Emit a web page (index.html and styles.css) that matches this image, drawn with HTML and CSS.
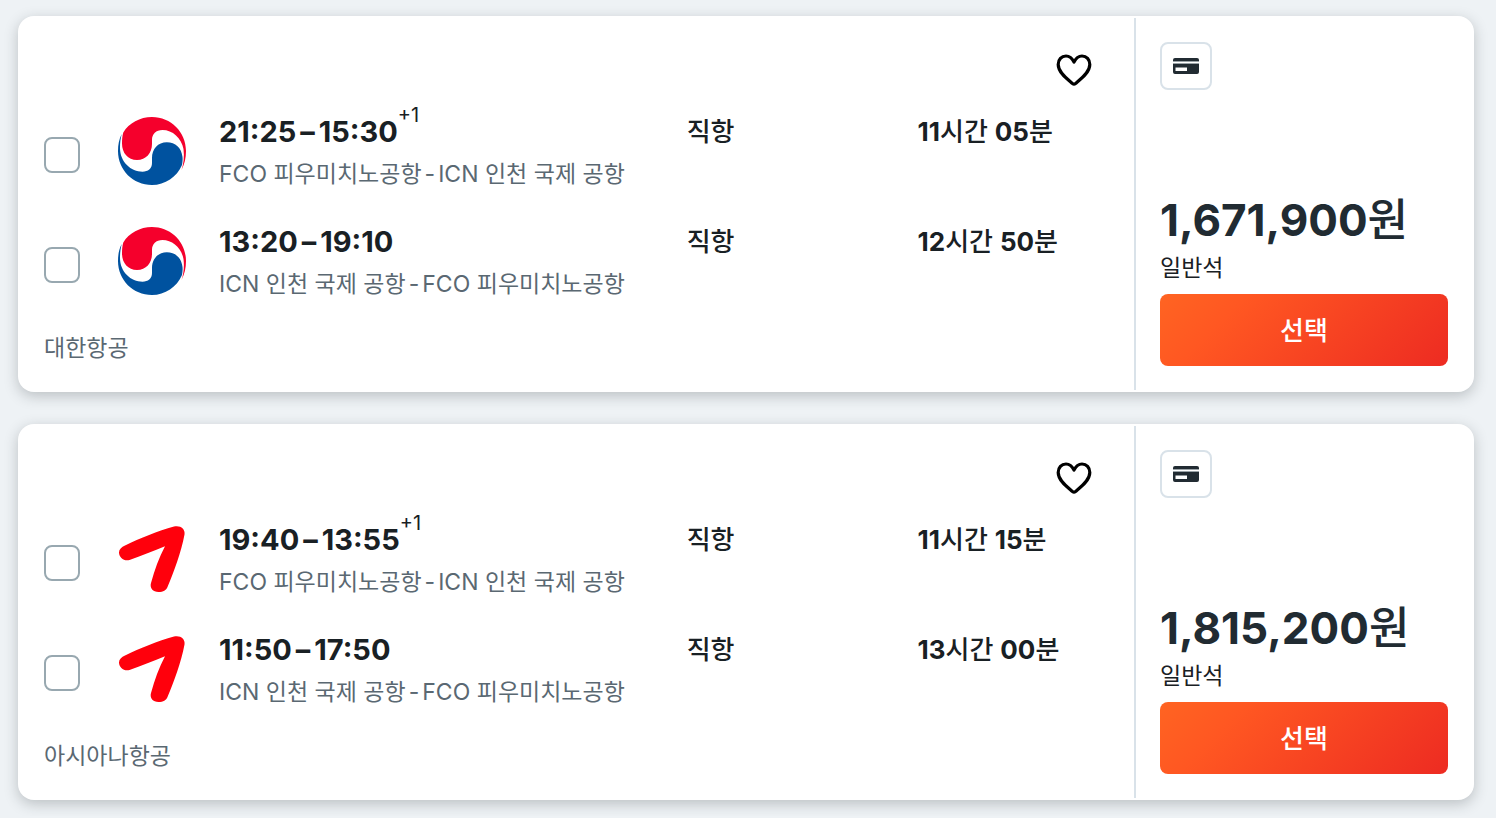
FILE: index.html
```html
<!DOCTYPE html>
<html lang="ko">
<head>
    <meta charset="UTF-8">
    <meta name="viewport" content="width=device-width, initial-scale=1.0">
    <title>항공권 검색 결과</title>
    <link rel="stylesheet" href="styles.css">
</head>
<body>
    <!-- Shared icons -->
    <svg class="sprite" aria-hidden="true">
        <symbol id="korean-air" viewBox="0 0 68 68">
            <path fill="#f5002c" d="M5.3 15.5C11 6 22 0 34 0c19 0 34 15 34 34 0 7-1.500 13-4.500 19 2-6 3-13 2-21C63.500 21 54.500 13 44.500 13 38 13 34 17 34 23v4c0 9-6 16-15 16C10 43 4 36 4 26.500c0-4 .3-8 1.300-11z"/>
            <path fill="#00529f" d="M3.700 17C1 22 0 28 0 34c0 19 15 34 34 34 13 0 25-8 30-20 .5-3 .8-5 .5-8-1-9-7-14.700-15.700-14.700C40 25.300 34 32 34 41v5c0 5.500-4 8.700-9.500 8.700C13 54.700 2 45 2 31c0-5 .5-9.500 1.700-14z"/>
        </symbol>
        <symbol id="asiana" viewBox="0 0 68 68">
            <path fill="#ff000c" d="M7 20.500C22 13 40 6 56 1.500c6-1.500 11.500 2 10.500 8C63 28 56 46 49.500 62c-1.500 3.500-4 5-9 5-5.500 0-9-4-7.500-9C36.500 45 41 33 47 21.300 36 26 23 31 11.500 35 6 36.500 1 32.500 1 27.500 1 24.500 3.500 22 7 20.500z"/>
        </symbol>
        <symbol id="heart" viewBox="0 0 36 32">
            <path fill="none" stroke="#000" stroke-width="3.200" stroke-linejoin="round" d="M18 8C16 4 13.500 2 10 2 5.500 2 2.200 5.500 2.200 10.500c0 8 9 14.500 14.300 19 1 .8 2 .8 3 0 5.300-4.500 14.300-11 14.300-19C33.800 5.500 30.500 2 26 2c-3.500 0-6 2-8 6z"/>
        </symbol>
        <symbol id="card" viewBox="0 0 26 16">
            <path fill="#212b32" d="M2 0h22a2 2 0 0 1 2 2v1H0V2a2 2 0 0 1 2-2z"/>
            <path fill="#212b32" fill-rule="evenodd" d="M0 6h26v8a2 2 0 0 1-2 2H2a2 2 0 0 1-2-2zM2.500 9.500v3.500h11.500V9.500z"/>
            <path fill="#9aa3a8" d="M0 3h26v1H0zM0 5h26v1H0z"/>
        </symbol>
    </svg>

    <main class="results">
        <article class="card">
            <div class="card-main">
                <button class="save-button" aria-label="저장"><svg><use href="#heart"/></svg></button>
                <div class="legs">
                    <div class="leg">
                        <input type="checkbox" class="leg-check" id="leg1">
                        <svg class="leg-logo"><use href="#korean-air"/></svg>
                        <div class="leg-info">
                            <div>
                                <label class="leg-time" for="leg1">21:25<span class="dash">–</span>15:30<sup>+1</sup></label>
                                <div class="leg-route"><span>FCO</span> <span>피우미치노공항</span><i>-</i><span>ICN</span> <span>인천 국제 공항</span></div>
                            </div>
                            <div class="leg-stops">직항</div>
                            <div class="leg-duration"><b>11</b>시간 <b>05</b>분</div>
                        </div>
                    </div>
                    <div class="leg">
                        <input type="checkbox" class="leg-check" id="leg2">
                        <svg class="leg-logo"><use href="#korean-air"/></svg>
                        <div class="leg-info">
                            <div>
                                <label class="leg-time" for="leg2">13:20<span class="dash">–</span>19:10</label>
                                <div class="leg-route"><span>ICN</span> <span>인천 국제 공항</span><i>-</i><span>FCO</span> <span>피우미치노공항</span></div>
                            </div>
                            <div class="leg-stops">직항</div>
                            <div class="leg-duration"><b>12</b>시간 <b>50</b>분</div>
                        </div>
                    </div>
                </div>
                <div class="airline">대한항공</div>
            </div>
            <div class="card-side">
                <div class="fee-badge"><svg><use href="#card"/></svg></div>
                <div class="booking">
                    <div class="price"><b>1,671,900</b>원</div>
                    <div class="cabin">일반석</div>
                    <button class="select-button">선택</button>
                </div>
            </div>
        </article>

        <article class="card">
            <div class="card-main">
                <button class="save-button" aria-label="저장"><svg><use href="#heart"/></svg></button>
                <div class="legs">
                    <div class="leg">
                        <input type="checkbox" class="leg-check" id="leg3">
                        <svg class="leg-logo"><use href="#asiana"/></svg>
                        <div class="leg-info">
                            <div>
                                <label class="leg-time" for="leg3">19:40<span class="dash">–</span>13:55<sup>+1</sup></label>
                                <div class="leg-route"><span>FCO</span> <span>피우미치노공항</span><i>-</i><span>ICN</span> <span>인천 국제 공항</span></div>
                            </div>
                            <div class="leg-stops">직항</div>
                            <div class="leg-duration"><b>11</b>시간 <b>15</b>분</div>
                        </div>
                    </div>
                    <div class="leg">
                        <input type="checkbox" class="leg-check" id="leg4">
                        <svg class="leg-logo"><use href="#asiana"/></svg>
                        <div class="leg-info">
                            <div>
                                <label class="leg-time" for="leg4">11:50<span class="dash">–</span>17:50</label>
                                <div class="leg-route"><span>ICN</span> <span>인천 국제 공항</span><i>-</i><span>FCO</span> <span>피우미치노공항</span></div>
                            </div>
                            <div class="leg-stops">직항</div>
                            <div class="leg-duration"><b>13</b>시간 <b>00</b>분</div>
                        </div>
                    </div>
                </div>
                <div class="airline">아시아나항공</div>
            </div>
            <div class="card-side">
                <div class="fee-badge"><svg><use href="#card"/></svg></div>
                <div class="booking">
                    <div class="price"><b>1,815,200</b>원</div>
                    <div class="cabin">일반석</div>
                    <button class="select-button">선택</button>
                </div>
            </div>
        </article>
    </main>
</body>
</html>
```
FILE: styles.css
```css
* {
    box-sizing: border-box;
}
body {
    font-family: Inter, "Noto Sans CJK KR", sans-serif;
    margin: 0;
    padding: 16px 22px 16px 18px;
    background-color: #eef2f5;
    color: #192024;
}
button {
    font-family: inherit;
    border: none;
    cursor: pointer;
}
.sprite {
    display: none;
}
.results {
    display: flex;
    flex-direction: column;
    gap: 32px;
}
.card {
    display: flex;
    padding: 2px;
    background-color: #fff;
    border-radius: 16px;
    box-shadow: 0 4px 14px rgba(37, 42, 46, 0.25);
}
.card-main {
    flex: 1;
    display: flex;
    flex-direction: column;
    padding: 36px 24px 26px;
}
.save-button {
    align-self: flex-end;
    width: 36px;
    height: 32px;
    margin-right: 18px;
    padding: 0;
    background: none;
}
.save-button svg {
    display: block;
    width: 36px;
    height: 32px;
}
.legs {
    display: flex;
    flex-direction: column;
    gap: 26px;
    margin-top: 24px;
}
.leg {
    display: flex;
    align-items: center;
    height: 84px;
}
.leg-check {
    appearance: none;
    width: 36px;
    height: 36px;
    margin: 6px 38px 0 0;
    border: 2px solid #98a8b0;
    border-radius: 8px;
    background-color: #fff;
}
.leg-check:checked {
    background-color: #00529f;
}
.leg-logo {
    width: 68px;
    height: 68px;
    margin: 0 33px 2px 0;
}
.leg-info {
    flex: 1;
    display: grid;
    grid-template-columns: 2.43fr 1.2fr 1fr;
}
.leg-time {
    display: block;
    font-size: 29px;
    font-weight: 700;
    line-height: 44px;
}
.leg-time .dash {
    margin: 0 4px;
}
.leg-time sup {
    font-size: 20px;
    font-weight: 400;
    line-height: 0;
    vertical-align: 20px;
}
.leg-route {
    font-size: 23px;
    line-height: 40px;
    color: #5a6872;
}
.leg-route i {
    margin: 0 3px;
    font-style: normal;
}
.leg-stops,
.leg-duration {
    font-size: 26px;
    font-weight: 500;
    line-height: 44px;
    white-space: nowrap;
}
.airline {
    margin-top: 28px;
    font-size: 23px;
    line-height: 32px;
    color: #5a6872;
}
.card-side {
    flex: 0 0 338px;
    display: flex;
    flex-direction: column;
    justify-content: space-between;
    padding: 24px;
    border-left: 2px solid #d9e2e9;
}
.fee-badge {
    display: flex;
    align-items: center;
    justify-content: center;
    width: 52px;
    height: 48px;
    border: 2px solid #d9e2e9;
    border-radius: 8px;
}
.fee-badge svg {
    width: 26px;
    height: 16px;
}
.price {
    font-size: 44px;
    font-weight: 500;
    line-height: 64px;
    color: #212b32;
    white-space: nowrap;
}
.price b {
    font-weight: 700;
}
.cabin {
    font-size: 23px;
    line-height: 32px;
}
.select-button {
    display: block;
    width: 100%;
    height: 72px;
    margin-top: 10px;
    padding: 0 0 4px;
    border-radius: 8px;
    background: linear-gradient(135deg, #ff6422 0%, #ff5722 25%, #ed2b22 100%);
    color: #fff;
    font-size: 26px;
    font-weight: 500;
}
```
